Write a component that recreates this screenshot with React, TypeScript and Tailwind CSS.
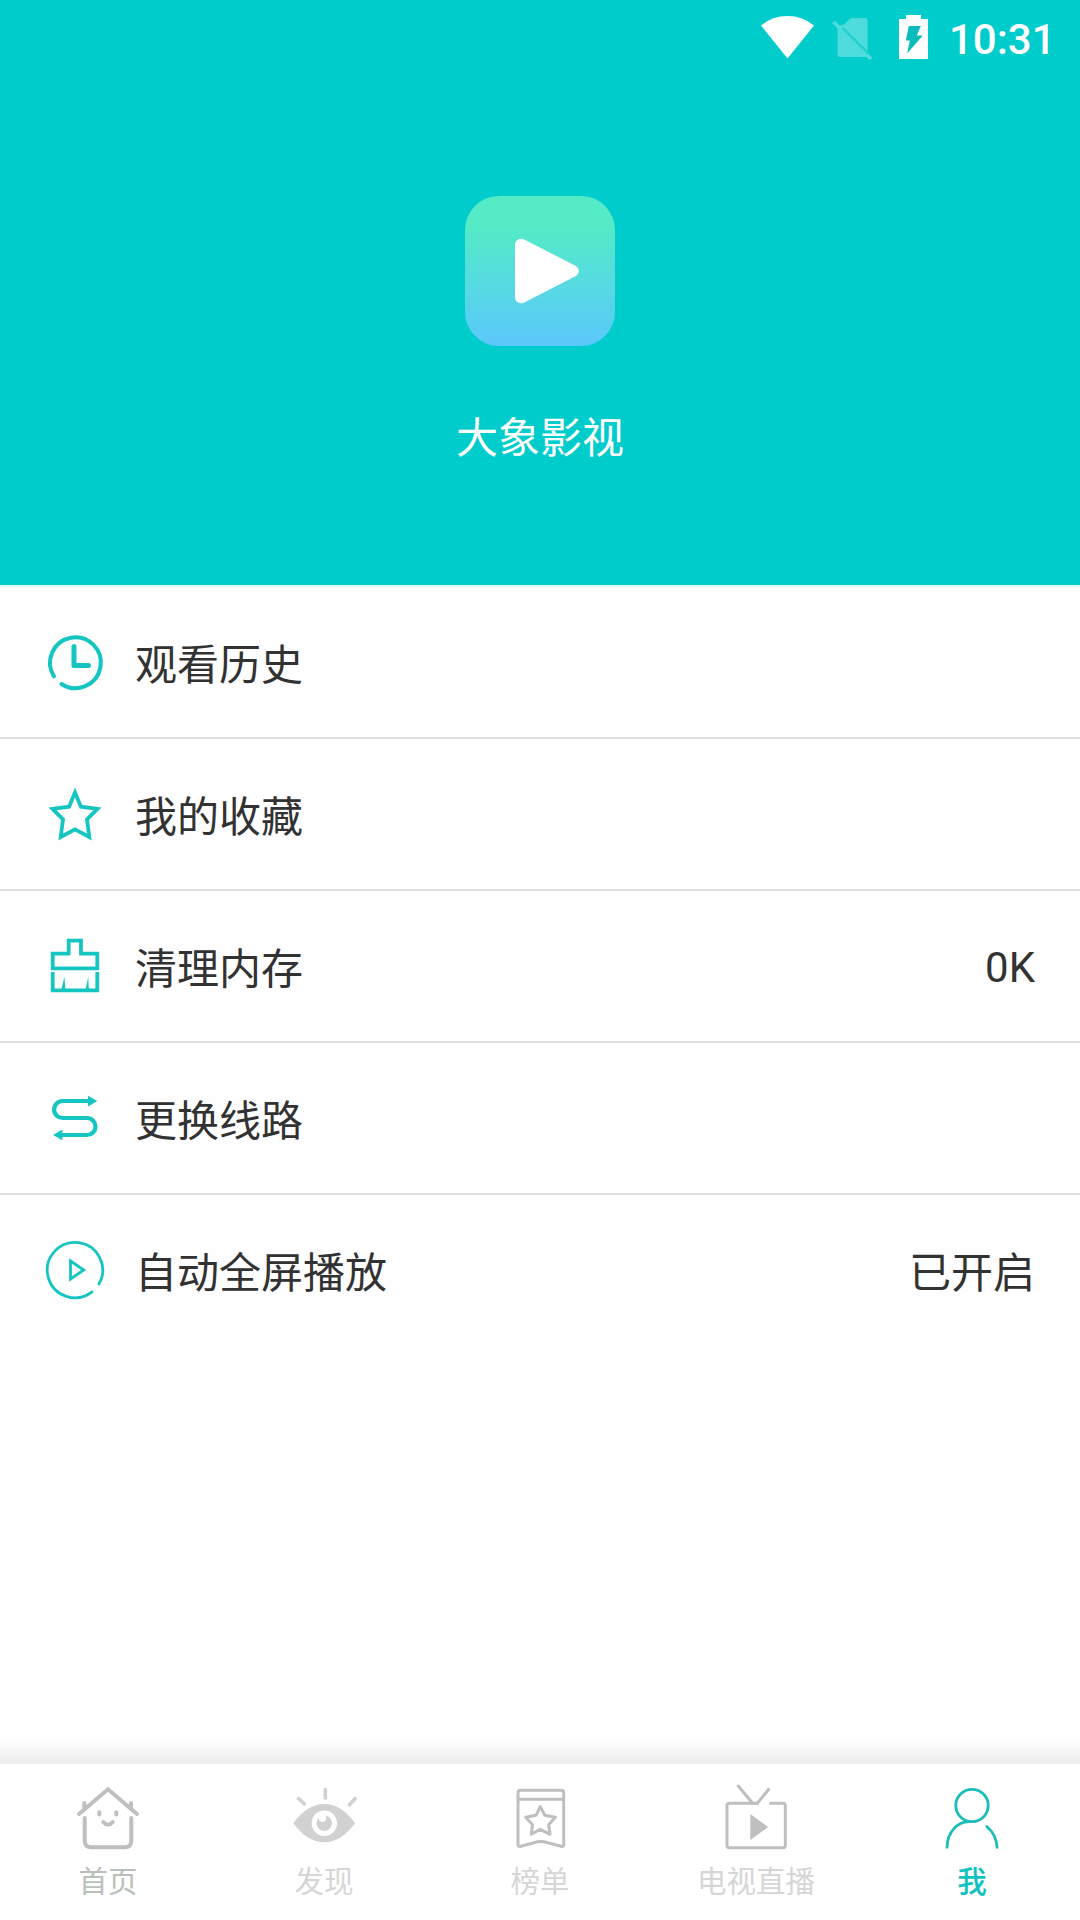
import type { ReactNode } from "react";

function StatusBar() {
  return (
    <div className="flex h-[72px] items-start pl-[760px] pt-[14px]">
      <svg className="h-[46px] w-[55px]" viewBox="0 0 55 46" fill="#fff">
        <path d="M27.5 44.5 1 11.6Q12 2 27.5 2T54 11.6Z" />
      </svg>
      <svg className="ml-[16px] h-[46px] w-[42px]" viewBox="0 0 42 46">
        <path
          d="M6.5 12 13 10.5 18 5.500Q19.5 4 21.5 4H34q2.5 0 2.5 2.5V40.5q0 2.500-2.5 2.500H9Q6.5 43 6.5 40.5Z"
          fill="#4ddbdb"
        />
        <path d="m2.5 8 37.5 37" stroke="#4ddbdb" strokeWidth="3.8" />
        <path d="m11.5 14 26 25.500" stroke="#1fd0d0" strokeWidth="2.4" />
      </svg>
      <svg className="ml-[26px] h-[46px] w-[29px]" viewBox="0 0 29 46">
        <path d="M0 5h7V1h15v4h7v40H0Z" fill="#fff" />
        <path d="M9.8 12h12l-4 9.500h6L8.200 39.500l2.600-13H6.800Z" fill="#0cbcbc" />
      </svg>
      <span className="ml-[21px] mt-[2px] text-[42px] font-medium leading-[48px] text-white">
        10:31
      </span>
    </div>
  );
}

function Header() {
  return (
    <header className="h-[585px] bg-[#00cccc]">
      <StatusBar />
      <div className="flex flex-col items-center pt-[124px]">
        <div className="h-[150px] w-[150px] rounded-[34px] bg-linear-to-b from-[#54ebc6] from-20% to-[#5bc7fb]">
          <svg className="h-full w-full" viewBox="0 0 150 150">
            <path
              d="M56 48.700v52.600L107.700 75Z"
              fill="#fff"
              stroke="#fff"
              strokeWidth="12"
              strokeLinejoin="round"
            />
          </svg>
        </div>
        <h1 className="mt-[63px] text-[42px] leading-[60px] text-white">
          大象影视
        </h1>
      </div>
    </header>
  );
}

function MenuIcon({ children }: { children: ReactNode }) {
  return (
    <svg
      className="h-[66px] w-[66px] shrink-0"
      viewBox="0 0 66 66"
      fill="none"
      stroke="#15c5c2"
    >
      {children}
    </svg>
  );
}

const menu = [
  {
    label: "观看历史",
    icon: (
      <MenuIcon>
        <g strokeLinecap="round">
          <path
            d="M12 47.400A25.400 25.400 0 1 1 19.500 55"
            strokeWidth="4"
          />
          <path d="M32 17.500V36.500H46.500" strokeWidth="5" strokeLinejoin="round" />
        </g>
      </MenuIcon>
    ),
  },
  {
    label: "我的收藏",
    icon: (
      <MenuIcon>
        <path
          d="M33 11.500 38.900 25.700 55.500 27.800 45 38.500 47.300 56 33 48.300 18.700 56 21 38.500 10.500 27.800 27.100 25.700Z"
          strokeWidth="3.800"
          strokeMiterlimit="10"
        />
      </MenuIcon>
    ),
  },
  {
    label: "清理内存",
    value: <span className="pt-[4px]">0K</span>,
    icon: (
      <MenuIcon>
        <g strokeWidth="3.800">
          <path d="M26.700 20.700v-13H39v13h16.300v14.600H10.700V20.700h17.500" />
          <path d="M10.700 39v18.300h44.600V39" />
        </g>
        <path
          d="m19.500 56 3-12.300.8 12.300ZM43.800 56l2.400-12.300.6 12.300Z"
          fill="#15c5c2"
          stroke="none"
        />
      </MenuIcon>
    ),
  },
  {
    label: "更换线路",
    icon: (
      <MenuIcon>
        <path
          d="M47 16H20.600a8.500 8.500 0 0 0 0 17H45a8.500 8.500 0 0 1 0 17H19"
          strokeWidth="4.200"
        />
        <path
          d="m46 10.800 9.300 5.200-9.300 5.400ZM20.300 44.600 11 50l9.300 5.300Z"
          fill="#15c5c2"
          stroke="none"
        />
      </MenuIcon>
    ),
  },
  {
    label: "自动全屏播放",
    value: <span className="pt-[8px]">已开启</span>,
    icon: (
      <MenuIcon>
        <path
          d="M56.900 47A27.700 27.700 0 1 0 50 54.900"
          strokeWidth="2.800"
          strokeLinecap="round"
        />
        <path d="M28.500 24v18l13.200-9Z" strokeWidth="2.800" />
      </MenuIcon>
    ),
  },
];

function Menu() {
  return (
    <main className="flex-1 divide-y-2 divide-[#dedede] border-t-2 border-[#e0f8f8] text-[42px] leading-[60px] text-[#323232]">
      {menu.map((item) => (
        <div key={item.label} className="box-content flex h-[150px] items-center">
          <div className="flex flex-1 items-center pl-[42px] pr-[45px]">
            {item.icon}
            <span className="ml-[27px] flex-1 pt-[8px]">{item.label}</span>
            {item.value}
          </div>
        </div>
      ))}
    </main>
  );
}

function TabIcon({ children }: { children: ReactNode }) {
  return (
    <svg
      className="h-[66px] w-[66px] overflow-visible"
      viewBox="0 0 66 66"
      fill="none"
      stroke="#bfbfbf"
      strokeWidth="3"
      strokeLinecap="round"
      strokeLinejoin="round"
    >
      {children}
    </svg>
  );
}

const tabs = [
  {
    label: "首页",
    color: "text-[#b9c0b9]",
    icon: (
      <TabIcon>
        <g strokeWidth="4">
          <path
            d="M4 30 33 5.300 62 30M9.300 25v-6M56 25v-6"
            strokeLinejoin="miter"
          />
          <path d="M9.700 34v22.500q0 6.800 6.800 6.800h33q6.800 0 6.800-6.800V34" />
          <path d="M24.300 28.300v2.200M41.300 28.300v2.200M28.300 38q4.700 5.500 9.400 0" />
        </g>
      </TabIcon>
    ),
  },
  {
    label: "发现",
    color: "text-[#d6d6d6]",
    icon: (
      <TabIcon>
        <g stroke="none" fill="#d1d1d1">
          <path d="M2.300 39.300Q16 20 33.300 20T64 39.300Q50 58.300 33.300 58.300T2.300 39.300Z" />
          <circle cx="33.300" cy="39.300" r="12.700" fill="#fff" />
          <circle cx="33.300" cy="39.300" r="7.700" />
          <circle cx="31.500" cy="34.300" r="3.700" fill="#fff" />
        </g>
        <path
          d="M34.300 4.300v11.200M6.500 13.500l8 7.500M65 13.500l-7.500 8.500"
          stroke="#d1d1d1"
          strokeWidth="3.600"
          strokeLinecap="butt"
        />
      </TabIcon>
    ),
  },
  {
    label: "榜单",
    color: "text-[#d6d6d6]",
    icon: (
      <TabIcon>
        <path d="M11 8.800q0-2.500 2.500-2.500h40.700q2.500 0 2.500 2.500v51.700q0 2.600-2.700 1.800L37 57.800q-3.200-.8-6.400 0L13.800 62.300Q11 63 11 60.500ZM11 15.300h45.700" />
        <path d="m33.300 22.700 4.500 8.600 10.500 2-6.600 7.400 1.300 9.600-9.700-5-9 5 1.200-9.600-6.800-7.400 10.300-2Z" />
      </TabIcon>
    ),
  },
  {
    label: "电视直播",
    color: "text-[#d6d6d6]",
    icon: (
      <TabIcon>
        <path d="M34.500 19.300H6.500Q4 19.300 4 21.800v39.400q0 2.500 2.500 2.500h53.300q2.500 0 2.500-2.500V21.800q0-2.500-2.500-2.500H47.500" />
        <path d="m15.300 2 14.300 17.300M45.700 5.300 34.300 19.300" />
        <path d="M27.300 30v26L45 43Z" fill="#bfbfbf" stroke="none" />
      </TabIcon>
    ),
  },
  {
    label: "我",
    color: "font-medium text-[#10c2bf]",
    icon: (
      <TabIcon>
        <g stroke="#1bbdb9" strokeWidth="2.800">
          <circle cx="33" cy="21.500" r="16.200" />
          <path d="M8 63.300C8.500 48 18 38 30 37.700M47.800 42.500q9.500 8 10.300 20.800" />
        </g>
      </TabIcon>
    ),
  },
];

function TabBar() {
  return (
    <footer>
      <div className="h-[24px] bg-linear-to-b from-white to-[#ebebeb]" />
      <nav className="grid h-[156px] grid-cols-5 bg-white">
        {tabs.map((tab) => (
          <div key={tab.label} className="flex flex-col items-center pt-5">
            {tab.icon}
            <span
              className={`mt-[14px] text-[29.500px] leading-[36px] ${tab.color}`}
            >
              {tab.label}
            </span>
          </div>
        ))}
      </nav>
    </footer>
  );
}

export default function App() {
  return (
    <div className="flex h-[1920px] w-[1080px] flex-col overflow-hidden bg-[#fefefe] font-[Roboto,'Noto_Sans_CJK_SC',sans-serif]">
      <Header />
      <Menu />
      <TabBar />
    </div>
  );
}
